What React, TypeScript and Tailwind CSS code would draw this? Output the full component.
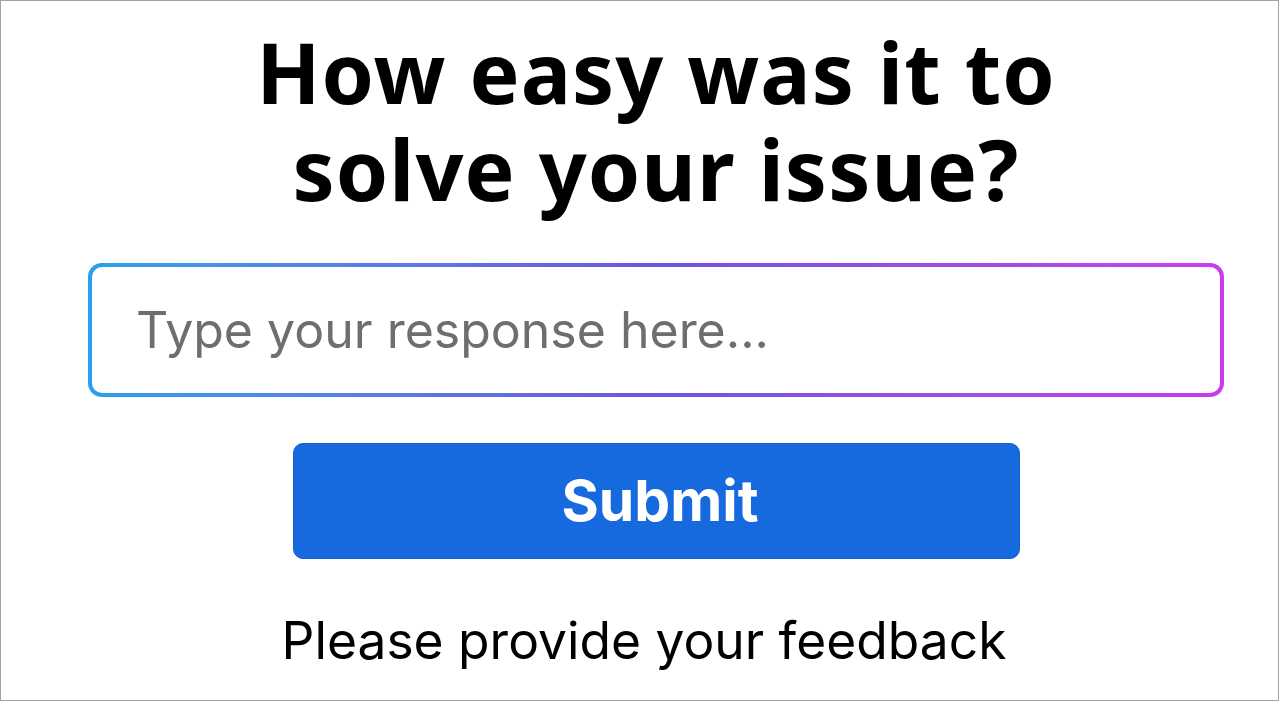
export default function App() {
  return (
    <div className="h-[701px] w-[1279px] overflow-hidden border border-[#a3a3a3] bg-white font-['Inter','Liberation_Sans',sans-serif]">
      <div className="flex flex-col items-center pl-[87px] pr-[54px] pt-[22px]">
        <h1 className="text-center font-['Noto_Sans','Open_Sans',sans-serif] text-[84px] font-bold leading-[97px] tracking-[1.1px] text-black">
          How easy was it to
          <br />
          solve your issue?
        </h1>

        <div className="mt-[46px] w-full rounded-[14px] bg-gradient-to-r from-[#27a0ef] via-[#6d55df] to-[#c83cee] p-[4px]">
          <input
            type="text"
            placeholder="Type your response here..."
            className="h-[126px] w-full rounded-[10px] bg-white px-[44px] text-[50px] text-[#333] outline-none placeholder:text-[#6e6e6e]"
          />
        </div>

        <button className="mt-[46px] h-[116px] w-[727px] rounded-[10px] border border-[#1360cf] bg-[#1769de] pl-[8px] text-[57px] font-bold text-white">
          Submit
        </button>

        <p className="mr-[24px] mt-[43px] text-[51.5px] text-black">
          Please provide your feedback
        </p>
      </div>
    </div>
  );
}
